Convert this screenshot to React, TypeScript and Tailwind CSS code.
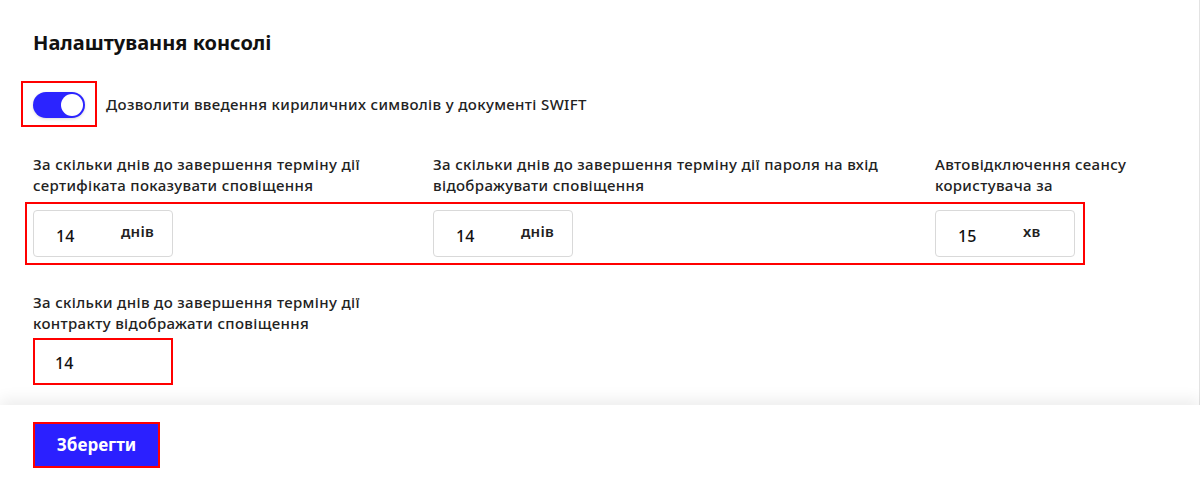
import React from "react";

const font = { fontFamily: '"Noto Sans", "Open Sans", sans-serif' };

function NumBox({ value, unit }: { value: string; unit: string }) {
  return (
    <div className="w-[140px] h-[47px] border border-[#d9d9d9] rounded-[4px] flex items-center bg-white">
      <span className="w-[87px] pl-[22px] text-[16px] font-medium text-[#111] leading-none pt-[4px]">{value}</span>
      <span className="text-[15px] tracking-[0.2px] font-semibold text-[#222] leading-none pb-[4px]">{unit}</span>
    </div>
  );
}

export default function App() {
  return (
    <div className="w-[1200px] h-[483px] bg-white flex flex-col overflow-hidden" style={font}>
      <div className="flex-1 border-r border-[#e3e3e3] pl-[33px] pt-[30px]">
        <h1 className="text-[20px] leading-[26px] font-bold text-[#111]">Налаштування консолі</h1>

        <div className="mt-[25px] ml-[-12px] flex items-center">
          <div className="w-[76px] h-[46px] border-2 border-[#ff0000] flex items-center justify-center pt-[2px]">
            <div className="w-[52px] h-[26px] rounded-full bg-[#2b24ff] flex items-center justify-end pr-[2px] shadow-[0_1px_3px_rgba(0,0,0,0.15)]">
              <div className="w-[22px] h-[22px] rounded-full bg-white"></div>
            </div>
          </div>
          <span className="ml-[9px] text-[15px] tracking-[0.35px] font-medium text-[#222]">
            Дозволити введення кириличних символів у документі SWIFT
          </span>
        </div>

        <div className="mt-[27px] flex text-[15px] tracking-[0.35px] leading-[21px] font-medium text-[#222]">
          <div className="w-[400px] pr-[10px]">За скільки днів до завершення терміну дії сертифіката показувати сповіщення</div>
          <div className="w-[502px] pr-[10px]">За скільки днів до завершення терміну дії пароля на вхід відображувати сповіщення</div>
          <div className="w-[220px]">Автовідключення сеансу користувача за</div>
        </div>

        <div className="mt-[14px] w-[1044px] flex outline-2 outline-[#ff0000] outline-offset-[6px]">
          <div className="w-[400px]"><NumBox value="14" unit="днів" /></div>
          <div className="w-[502px]"><NumBox value="14" unit="днів" /></div>
          <div><NumBox value="15" unit="хв" /></div>
        </div>

        <div className="mt-[35px] w-[380px] text-[15px] tracking-[0.35px] leading-[21px] font-medium text-[#222]">
          За скільки днів до завершення терміну дії контракту відображати сповіщення
        </div>
        <div className="mt-[4px] w-[140px] h-[47px] border-2 border-[#ff0000] flex items-center">
          <span className="pl-[20px] text-[16px] font-medium text-[#111] leading-none pt-[2px]">14</span>
        </div>
      </div>

      <div className="h-[78px] relative z-10 bg-white shadow-[0_-6px_14px_rgba(0,0,0,0.07)] pl-[33px] pt-[17px]">
        <button className="w-[127px] h-[46px] border-2 border-[#ff0000] bg-[#2b20ff] text-white text-[17px] font-bold flex items-center justify-center">
          Зберегти
        </button>
      </div>
    </div>
  );
}
